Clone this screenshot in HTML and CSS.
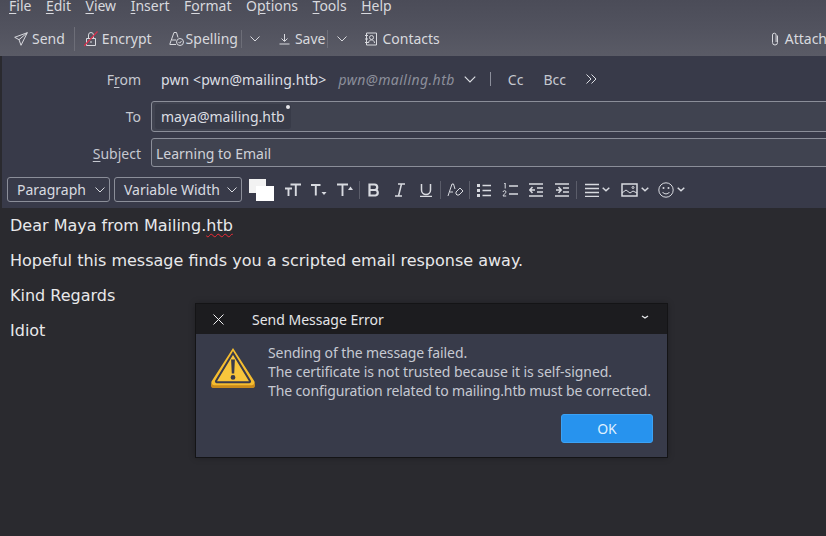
FILE: index.html
```html
<!DOCTYPE html>
<html lang="en">
<head>
<meta charset="utf-8">
<title>Write: Learning to Email</title>
<link rel="stylesheet" href="styles.css">
</head>
<body>
<div class="window">
  <div class="menubar">
    <span class="menu"><u>F</u>ile</span>
    <span class="menu"><u>E</u>dit</span>
    <span class="menu"><u>V</u>iew</span>
    <span class="menu"><u>I</u>nsert</span>
    <span class="menu">F<u>o</u>rmat</span>
    <span class="menu">O<u>p</u>tions</span>
    <span class="menu"><u>T</u>ools</span>
    <span class="menu"><u>H</u>elp</span>
  </div>
  <div class="toolbar">
    <span class="tool tool-send">
      <svg class="ico" viewBox="0 0 14 14"><path d="M13.300.700.700 5.300l4.300 2.400 2 5.600zM13.300.700 5 7.700" /></svg>Send
    </span>
    <span class="tsep"></span>
    <span class="tool tool-encrypt">
      <svg class="ico ico-lock" viewBox="0 0 14 16"><path d="M2.500 7.500h9v7h-9zM4.500 7.500V4a2.500 2.500 0 0 1 5 0v3.500M7 10v2"/><path class="red" d="M0 15 13.500 .5"/></svg>Encrypt
    </span>
    <span class="tool tool-spell">
      <svg class="ico ico-spell" viewBox="0 0 15 15"><path d="M.7 13.500 5 1.500h2.500L9 6.500M3 9h4M1 13.500h6"/><circle cx="11" cy="11" r="3.500"/><path d="m9.500 11 1.200 1.200 1.800-2.200"/></svg>Spelling
    </span>
    <span class="tsep tsep-b tsep-spell"></span>
    <svg class="chev chev-a" viewBox="0 0 10 6"><path d="m.5.5 4.500 4.500L9.500.5"/></svg>
    <span class="tool tool-save">
      <svg class="ico ico-save" viewBox="0 0 11 12"><path d="M5.500 1v7M2.500 5.500l3 3 3-3M.5 11h10"/></svg>Save
    </span>
    <span class="tsep tsep-b tsep-save"></span>
    <svg class="chev chev-a chev-save" viewBox="0 0 10 6"><path d="m.5.5 4.500 4.500L9.500.5"/></svg>
    <span class="tool tool-contacts">
      <svg class="ico ico-card" viewBox="0 0 14 14"><path d="M2.500 1h10v12h-10zM1 3.500h3M1 7h3M1 10.500h3"/><circle cx="7.500" cy="5.500" r="2"/><path d="M4.500 11c0-4 6-4 6 0"/></svg>Contacts
    </span>
    <span class="spacer"></span>
    <span class="tool tool-attach">
      <svg class="ico ico-clip" viewBox="0 0 8 14"><path d="M6.500 3.500v7a2.500 2.500 0 0 1-5 0V3a1.800 1.800 0 0 1 3.600 0v7"/></svg>Attach
    </span>
  </div>
  <div class="header">
    <div class="row row-from">
      <span class="label">F<u>r</u>om</span>
      <span class="from-name">pwn &lt;pwn@mailing.htb&gt;</span>
      <span class="from-addr">pwn@mailing.htb</span>
      <svg class="chev chev-from" viewBox="0 0 10 6"><path d="m.5.5 4.500 4.500L9.500.5"/></svg>
      <span class="vsep"></span>
      <span class="cc">Cc</span>
      <span class="cc bcc">Bcc</span>
      <svg class="more" viewBox="0 0 11 10"><path d="m.5.500 4.500 4.500L.5 9.500M5.500.500 10 5l-4.500 4.500"/></svg>
    </div>
    <div class="row row-to">
      <span class="label">To</span>
      <div class="field field-to">
        <span class="pill">maya@mailing.htb<span class="dot"></span></span>
      </div>
    </div>
    <div class="row row-subject">
      <span class="label"><u>S</u>ubject</span>
      <div class="field field-subject">Learning to Email</div>
    </div>
    <div class="formatbar">
      <span class="select sel-par">Paragraph<svg class="chev" viewBox="0 0 10 6"><path d="m.5.5 4.500 4.500L9.500.5"/></svg></span>
      <span class="select sel-font">Variable Width<svg class="chev" viewBox="0 0 10 6"><path d="m.5.5 4.500 4.500L9.500.5"/></svg></span>
      <span class="swatches"><span class="sw sw-fg"></span><span class="sw sw-bg"></span></span>
      <span class="fi"><svg viewBox="0 0 16 14"><path class="heavy" d="M0 5.500h7M3.500 5.500V13M5.500 1.500H16M10.800 1.500V13"/></svg></span>
      <span class="fi"><svg viewBox="0 0 16 14"><path class="heavy" d="M0 2h9.500M4.800 2v10.500"/><path class="fill" d="M10.500 9h5L13 12z"/></svg></span>
      <span class="fi"><svg viewBox="0 0 16 14"><path class="heavy" d="M0 1.500h11M5.500 1.500V13"/><path class="fill" d="M11 7h5l-2.500-3.500z"/></svg></span>
      <span class="fsep"></span>
      <span class="fi"><svg viewBox="0 0 14 14"><path class="bold" d="M2.500 1.500h5a2.700 2.700 0 0 1 0 5.500h-5zM2.500 7h6a2.800 2.800 0 0 1 0 5.500h-6z"/></svg></span>
      <span class="fi"><svg viewBox="0 0 14 14"><path d="M5 1h7M2 13h7M8.500 1l-3 12" class="med"/></svg></span>
      <span class="fi"><svg viewBox="0 0 14 14"><path d="M2.500 1v6a4.500 4.500 0 0 0 9 0V1M1 13.500h12" class="med"/></svg></span>
      <span class="fsep"></span>
      <span class="fi fi-after"><svg viewBox="0 0 16 14"><path d="M1 13 5 1h1.500L8 6M3 9h3"/><path d="m9 9 4-4 3 3-4 4h-2l-1-1z"/></svg></span>
      <span class="fsep"></span>
      <span class="fi fi-list fi-after"><svg viewBox="0 0 14 14"><path class="fill" d="M0 1h3v3H0zM0 6h3v3H0zM0 11h3v3H0z"/><path class="med" d="M5.500 2.500H14M5.500 7.500H14M5.500 12.500H14"/></svg></span>
      <span class="fi fi-list"><svg viewBox="0 0 16 14"><path class="med" d="M7 3h9M7 11h9"/><path d="M2 .5 3.200 0v5.500M1 9c.3-1.800 3-1.800 3 0 0 1-2.500 2.500-3 4h3.200"/></svg></span>
      <span class="fi fi-list"><svg viewBox="0 0 14 14"><path class="med" d="M0 1h14M0 13h14M8 5h6M8 9h6M6 7H1M3.500 4 .8 7l2.700 3"/></svg></span>
      <span class="fi fi-list"><svg viewBox="0 0 14 14"><path class="med" d="M0 1h14M0 13h14M8 5h6M8 9h6M1 7h5M3.500 4l2.700 3-2.700 3"/></svg></span>
      <span class="fsep"></span>
      <span class="fi fi-menu"><svg class="w14" viewBox="0 0 14 14"><path class="med" d="M0 1.500h14M0 5.500h14M0 9.500h14M0 13.500h14"/></svg><svg class="cv" viewBox="0 0 8 5"><path class="med" d="m.7.700 3.300 3 3.300-3"/></svg></span>
      <span class="fi fi-menu fi-img"><svg class="w17" viewBox="0 0 17 14"><path d="M1 1h15v12H1z" class="med"/><path d="m1 10 4-3 4 3 3-2 4 2"/><circle cx="12" cy="4.500" r="1"/></svg><svg class="cv" viewBox="0 0 8 5"><path class="med" d="m.7.700 3.300 3 3.300-3"/></svg></span>
      <span class="fi fi-menu fi-smile"><svg class="w16" viewBox="0 0 16 16"><circle cx="8" cy="8" r="7.200"/><circle class="fill" cx="5.500" cy="6" r="1"/><circle class="fill" cx="10.500" cy="6" r="1"/><path d="M4.500 10c1.500 2.500 5.500 2.500 7 0"/></svg><svg class="cv" viewBox="0 0 8 5"><path class="med" d="m.7.700 3.300 3 3.300-3"/></svg></span>
    </div>
  </div>
  <div class="body">
    <p>Dear Maya from Mailing.<span class="misspelt">htb</span></p>
    <p>Hopeful this message finds you a scripted email response away.</p>
    <p>Kind Regards</p>
    <p>Idiot</p>
  </div>
</div>
<div class="dialog">
  <div class="dlg-title">
    <svg class="dlg-x" viewBox="0 0 11 11"><path d="m.5.500 10 10M10.500.500l-10 10"/></svg>
    <span class="dlg-name">Send Message Error</span>
    <svg class="dlg-down" viewBox="0 0 8 5"><path d="m1 1 3 2 3-2"/></svg>
  </div>
  <div class="dlg-body">
    <div class="dlg-main">
      <svg class="warn" viewBox="0 0 44 40">
        <path class="warn-base" d="M22 2 1 35a2.800 2.800 0 0 0 2.300 5h37.400a2.800 2.800 0 0 0 2.300-5z"/>
        <path class="warn-face" d="M22 0 .8 33a2.800 2.800 0 0 0 2.400 4.300h37.600a2.800 2.800 0 0 0 2.400-4.300z"/>
        <path class="warn-inner" d="M22 5 5 33a.8.8 0 0 0 .7 1.200h32.600a.8.8 0 0 0 .7-1.200z"/>
        <path class="warn-bang" d="M20.100 11.500h3.800l-.7 14h-2.400zM22 27a2.400 2.400 0 1 1 0 4.800 2.400 2.400 0 0 1 0-4.800z"/>
      </svg>
      <div class="dlg-text">
        <div class="ln-a">Sending of the message failed.</div>
        <div class="ln-b">The certificate is not trusted because it is self-signed.</div>
        <div class="ln-c">The configuration related to mailing.htb must be corrected.</div>
      </div>
    </div>
    <div class="dlg-actions"><button class="ok">OK</button></div>
  </div>
</div>
</body>
</html>
```
FILE: styles.css
```css
* { box-sizing: border-box; }
html, body { margin: 0; height: 100%; overflow: hidden; background: #2a2a2f; }
body { font-family: "Noto Sans", sans-serif; font-size: 14px; color: #d4d6dc; }
svg { fill: none; stroke: currentColor; stroke-width: 1; display: block; flex: none; }
u { text-underline-offset: 2px; text-decoration-thickness: 1px; }

.window { height: 536px; display: flex; flex-direction: column; padding-left: 2px; background: #2a2a2f; overflow: hidden; }

.menubar { height: 26px; flex: none; display: flex; align-items: flex-start; gap: 14.5px; background: linear-gradient(#4b4c58, #51525e); color: #d8d9de; margin-left: -2px; padding-left: 9px; }
.menu { line-height: 14px; margin-top: -1px; }

.toolbar { height: 30px; flex: none; display: flex; align-items: center; padding-bottom: 5px; background: linear-gradient(#51525e, #5a5b66); color: #d8d9de; margin-left: -2px; padding-left: 14px; overflow: hidden; white-space: nowrap; }
.tool { display: flex; align-items: center; }
.ico { width: 14px; height: 14px; margin-right: 4px; }
.red { stroke: #d8304c; stroke-width: 1.2; }
.tsep { width: 1px; height: 24px; background: #6d6e78; margin: 0 9px 0 9px; }
.tsep-b { height: 18px; }
.tsep-spell { margin: 0 8px 0 3px; }
.tsep-save { margin: 0 9px 0 2px; }
.chev { width: 10px; height: 6px; }
.chev-a { margin-right: 19px; }
.chev-save { margin-right: 17px; }
.tool-encrypt .ico-lock { width: 14px; height: 16px; margin-right: 4px; }
.tool-spell { margin-left: 17px; }
.ico-spell { width: 15px; height: 15px; margin-right: 2px; }
.ico-save { width: 11px; height: 12px; margin-right: 5px; }
.ico-card { margin-right: 4px; }
.ico-clip { width: 8px; height: 14px; margin-right: 6px; }
.spacer { flex: 1; }
.tool-attach { margin-right: -1px; }

.header { height: 152px; flex: none; background: #383a49; display: flex; flex-direction: column; overflow: hidden; white-space: nowrap; }
.row { display: flex; align-items: center; }
.label { width: 139px; flex: none; text-align: right; color: #c5c8d0; }
.row-from { height: 45px; color: #dcdee3; padding-top: 1px; }
.from-name { margin-left: 20px; letter-spacing: .1px; }
.from-addr { margin-left: 12px; font-style: italic; color: #8c8f9b; letter-spacing: .45px; }
.chev-from { margin-left: 9px; width: 12px; height: 7px; }
.vsep { width: 1px; height: 14px; background: #8c8f9b; margin-left: 14px; }
.cc { margin-left: 17px; color: #c5c8d0; }
.bcc { margin-left: 20px; }
.more { width: 11px; height: 10px; margin-left: 20px; }

.field { margin-left: 10px; width: 700px; flex: none; border: 1px solid #8b8e99; border-radius: 3px; background: #404350; color: #dcdee3; display: flex; align-items: center; }
.row-to { height: 31px; }
.field-to { height: 31px; padding-left: 3px; }
.pill { position: relative; background: #383b48; border-radius: 3px; height: 25px; display: flex; align-items: center; padding: 0 6px; margin-top: -1px; }
.dot { position: absolute; right: 1px; top: 1px; width: 4px; height: 4px; border-radius: 50%; background: #e6e6ea; }
.row-subject { height: 29px; margin-top: 6px; }
.row-subject .label { padding-top: 2px; }
.field-subject { height: 29px; padding: 1px 0 0 4px; color: #cfd1d8; }

.formatbar { display: flex; align-items: center; margin-top: 10px; padding-left: 5px; height: 25px; color: #d8dae0; }
.select { height: 25px; border: 1px solid #8b8e99; border-radius: 3px; display: flex; align-items: center; padding: 0 4px 0 9px; color: #d8dae0; justify-content: space-between; }
.sel-par { width: 103px; }
.sel-font { width: 128px; margin-left: 4px; }
.select .chev { margin-left: 4px; }
.swatches { position: relative; width: 25px; height: 22px; margin-left: 7px; flex: none; }
.sw { position: absolute; display: block; }
.sw-bg { left: 7px; top: 7px; width: 18px; height: 15px; background: #fff; }
.sw-fg { left: 0; top: 0; width: 17px; height: 14px; background: #f2f2f2; }
.fi { width: 26px; height: 16px; flex: none; display: flex; align-items: center; justify-content: center; }
.swatches + .fi { margin-left: 6px; }
.fi svg { width: 16px; height: 14px; }
.fi svg.w14, .fi-list svg { width: 14px; height: 14px; }
.fi-list svg[viewBox="0 0 16 14"] { width: 16px; }
.fi svg.w17 { width: 17px; height: 14px; }
.fi svg.w16 { width: 16px; height: 16px; }
.fi svg.cv { width: 8px; height: 5px; margin-left: 3px; }
.fill { fill: currentColor; stroke: none; }
.bold { stroke-width: 2.2; }
.med { stroke-width: 1.5; }
.heavy { stroke-width: 1.9; }
.fsep { width: 1px; height: 18px; background: #5b5d6a; flex: none; margin: 0 1px; }
.fi-menu { width: 33px; margin-left: 3px; }
.fi-img { width: 34px; margin-left: 4px; }
.fi-smile { width: 33px; margin-left: 3px; }

.body { flex: 1; font-family: "DejaVu Sans", sans-serif; font-size: 16px; line-height: 19px; color: #e8e8ea; padding: 8px 8px; background: #2a2a2f; }
.body p { margin: 0 0 16px; }
.misspelt { text-decoration: underline wavy #ef2b36 1px; text-underline-offset: 2px; }

.dialog { position: absolute; left: 195px; top: 303px; width: 473px; height: 155px; border: 1px solid #141416; background: #383b4a; display: flex; flex-direction: column; box-shadow: 0 0 6px rgba(0,0,0,.25); }
.dlg-title { height: 30px; flex: none; background: #1c1c1f; display: flex; align-items: center; color: #e4e5e8; }
.dlg-x { width: 11px; height: 11px; margin-left: 17px; color: #f0f0f2; }
.dlg-name { margin-left: 28px; }
.dlg-down { width: 8px; height: 5px; margin-left: auto; margin-right: 18px; stroke-width: 1.4; margin-top: -3px; }
.dlg-body { flex: 1; display: flex; flex-direction: column; }
.dlg-main { display: flex; padding: 9px 0 0 15px; }
.warn { width: 44px; height: 40px; margin-top: 5px; stroke: none; }
.warn-base { fill: #c98a1b; }
.warn-face { fill: #f5bd2f; }
.warn-inner { fill: #f8c63c; stroke: #3a3b4c; stroke-width: 2; }
.warn-bang { fill: #3a3b4c; }
.dlg-text { margin-left: 13px; line-height: 19px; color: #c6c9d2; }
.ln-a { letter-spacing: -.1px; }
.ln-b { letter-spacing: -.06px; }
.ln-c { letter-spacing: -.12px; }
.dlg-actions { display: flex; justify-content: flex-end; padding: 14px 14px 0 0; }
.ok { width: 92px; height: 29px; border: 1px solid #3ba2f5; border-radius: 3px; background: #2793ee; color: #dff0ff; font: 14px "Noto Sans", sans-serif; padding: 0; }
```
